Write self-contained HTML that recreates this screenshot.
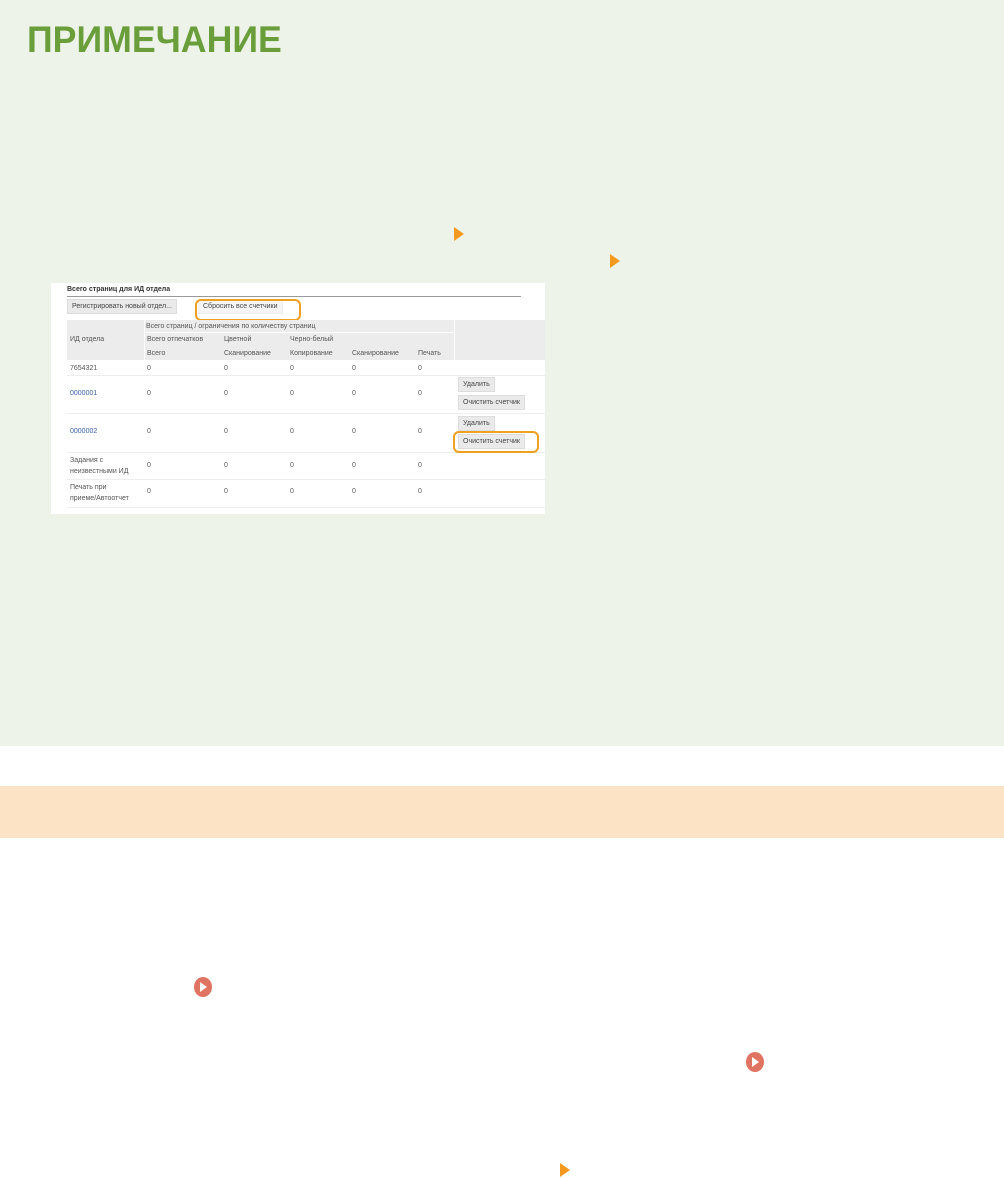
<!DOCTYPE html>
<html><head><meta charset="utf-8"><style>
*{margin:0;padding:0;box-sizing:border-box}
body{width:1004px;height:1178px;background:#fff;position:relative;font-family:"Liberation Sans",sans-serif;overflow:hidden}
.abs{position:absolute}
.note{left:0;top:0;width:1004px;height:746px;background:#eef3e9}
h1{position:absolute;left:27px;top:18px;font-size:37px;line-height:43px;font-weight:bold;color:#6a9e3a;transform:scaleX(0.965);transform-origin:left;white-space:nowrap}
.tri{width:0;height:0;border-top:7px solid transparent;border-bottom:7px solid transparent;border-left:10px solid #f39a1e}
.band{left:0;top:786px;width:1004px;height:52px;background:#fce3c5}
.circ{width:18px;height:20px;border-radius:50%;background:#e07462}
.circ:after{content:"";position:absolute;left:6px;top:5px;border-top:5px solid transparent;border-bottom:5px solid transparent;border-left:7px solid #fff}
.shot{left:51px;top:283px;width:494px;height:231px;background:#fff;font-size:7px;color:#555}
.t{position:absolute;white-space:nowrap}
.g{position:absolute;background:#ececec}
.btn{position:absolute;background:#eaeaea;border:1px solid #ddd;font-size:7px;color:#444;padding:3px 4px;white-space:nowrap}
.ring{position:absolute;border:2px solid #f0a020;border-radius:6px}
.line{position:absolute;height:1px;background:#eee;left:16px;width:478px}
a{color:#3a5fa8}
</style></head><body>
<div class="abs note"></div>
<h1>ПРИМЕЧАНИЕ</h1>
<div class="abs tri" style="left:454px;top:227px"></div>
<div class="abs tri" style="left:610px;top:254px"></div>
<div class="abs shot">
 <div class="t" style="left:16px;top:3px;font-weight:bold;color:#333">Всего страниц для ИД отдела</div>
 <div class="abs" style="left:16px;top:13px;width:454px;height:1px;background:#999"></div>
 <div class="btn" style="left:16px;top:16px">Регистрировать новый отдел...</div>
 <div class="btn" style="left:147px;top:16px;background:#f5f5f5;border-color:#eee">Сбросить все счетчики</div>
 <div class="ring" style="left:144px;top:16px;width:106px;height:22px"></div>
 <div class="g" style="left:16px;top:37px;width:478px;height:40px"></div>
 <div class="abs" style="left:93px;top:37px;width:1px;height:40px;background:#fff"></div>
 <div class="abs" style="left:403px;top:37px;width:1px;height:40px;background:#fff"></div>
 <div class="abs" style="left:93px;top:49px;width:310px;height:1px;background:#fff"></div>
 <div class="t" style="left:95px;top:40px">Всего страниц / ограничения по количеству страниц</div>
 <div class="t" style="left:19px;top:53px">ИД отдела</div>
 <div class="t" style="left:96px;top:53px">Всего отпечатков</div>
 <div class="t" style="left:173px;top:53px">Цветной</div>
 <div class="t" style="left:239px;top:53px">Черно-белый</div>
 <div class="t" style="left:96px;top:67px">Всего</div>
 <div class="t" style="left:173px;top:67px">Сканирование</div>
 <div class="t" style="left:239px;top:67px">Копирование</div>
 <div class="t" style="left:301px;top:67px">Сканирование</div>
 <div class="t" style="left:367px;top:67px">Печать</div>
 <div class="t" style="left:19px;top:82px">7654321</div>
 <div class="line" style="top:92px"></div>
 <div class="t" style="left:19px;top:107px"><a>0000001</a></div>
 <div class="line" style="top:130px"></div>
 <div class="t" style="left:19px;top:145px"><a>0000002</a></div>
 <div class="line" style="top:169px"></div>
 <div class="t" style="left:19px;top:172px;line-height:11px">Задания с<br>неизвестными ИД</div>
 <div class="line" style="top:196px"></div>
 <div class="t" style="left:19px;top:199px;line-height:11px">Печать при<br>приеме/Автоотчет</div>
 <div class="line" style="top:224px"></div>
 <div class="t" style="left:96px;top:82px">0</div><div class="t" style="left:173px;top:82px">0</div><div class="t" style="left:239px;top:82px">0</div><div class="t" style="left:301px;top:82px">0</div><div class="t" style="left:367px;top:82px">0</div>
 <div class="t" style="left:96px;top:107px">0</div><div class="t" style="left:173px;top:107px">0</div><div class="t" style="left:239px;top:107px">0</div><div class="t" style="left:301px;top:107px">0</div><div class="t" style="left:367px;top:107px">0</div>
 <div class="t" style="left:96px;top:145px">0</div><div class="t" style="left:173px;top:145px">0</div><div class="t" style="left:239px;top:145px">0</div><div class="t" style="left:301px;top:145px">0</div><div class="t" style="left:367px;top:145px">0</div>
 <div class="t" style="left:96px;top:179px">0</div><div class="t" style="left:173px;top:179px">0</div><div class="t" style="left:239px;top:179px">0</div><div class="t" style="left:301px;top:179px">0</div><div class="t" style="left:367px;top:179px">0</div>
 <div class="t" style="left:96px;top:205px">0</div><div class="t" style="left:173px;top:205px">0</div><div class="t" style="left:239px;top:205px">0</div><div class="t" style="left:301px;top:205px">0</div><div class="t" style="left:367px;top:205px">0</div>
 <div class="btn" style="left:407px;top:94px">Удалить</div>
 <div class="btn" style="left:407px;top:112px">Очистить счетчик</div>
 <div class="btn" style="left:407px;top:133px">Удалить</div>
 <div class="btn" style="left:407px;top:151px">Очистить счетчик</div>
 <div class="ring" style="left:402px;top:148px;width:86px;height:22px"></div>
</div>
<div class="abs band"></div>
<div class="abs circ" style="left:194px;top:977px"></div>
<div class="abs circ" style="left:746px;top:1052px"></div>
<div class="abs tri" style="left:560px;top:1163px"></div>
</body></html>
